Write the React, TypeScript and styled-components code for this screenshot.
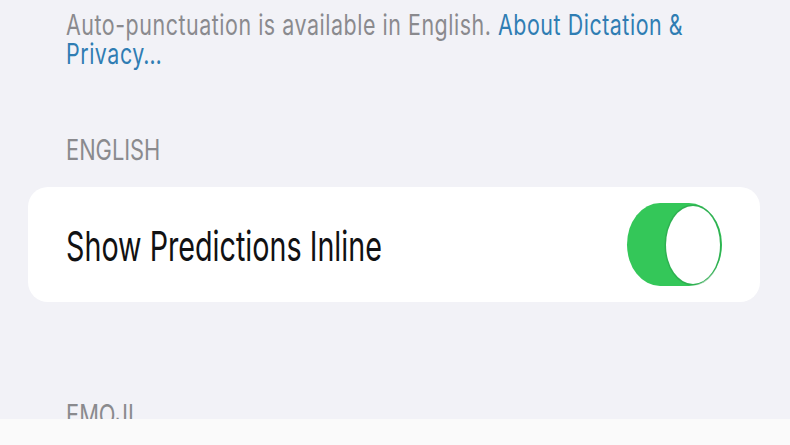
import React from "react";
import styled, { createGlobalStyle } from "styled-components";

const TS_BODY = 0.7; // horizontal squeeze of the body text
const TS_SMALL = 0.765; // horizontal squeeze of the footnote text
const TS_HEADER = 0.78; // horizontal squeeze of the section headers

const Global = createGlobalStyle`
  html, body {
    margin: 0;
    padding: 0;
    background: #f2f2f7;
    overflow: hidden;
  }
  body {
    font-family: Inter, "Noto Sans", Roboto, sans-serif;
    -webkit-font-smoothing: antialiased;
  }
`;

const Page = styled.div`
  width: 790px;
  height: 445px;
  background: #f2f2f7;
  overflow: hidden;
  position: relative;
`;

const Content = styled.div`
  display: flex;
  flex-direction: column;
  padding: 11px 30px 0 28px;
`;

const Footnote = styled.p`
  margin: 0 0 0 38px;
  width: ${660 / TS_SMALL}px;
  transform: scaleX(${TS_SMALL});
  transform-origin: left top;
  font-size: 28px;
  line-height: 29px;
  letter-spacing: 0.7px;
  color: #8a8a8e;
`;

const Link = styled.span`
  color: #2f7db3;
`;

const SectionHeader = styled.div<{ $top: number }>`
  margin: ${(p) => p.$top}px 0 0 38px;
  font-size: 28px;
  line-height: 29px;
  color: #8a8a8e;
  text-transform: uppercase;
  transform: scaleX(${TS_HEADER});
  transform-origin: left top;
`;

const Card = styled.div`
  margin-top: 22px;
  height: 115px;
  background: #ffffff;
  border-radius: 20px;
  display: flex;
  align-items: center;
  justify-content: space-between;
  padding: 0 38px;
`;

const RowLabel = styled.span`
  display: inline-block;
  font-size: 41px;
  line-height: 1;
  padding-top: 3px;
  color: #111113;
  transform: scaleX(${TS_BODY});
  transform-origin: left center;
  white-space: nowrap;
`;

const Track = styled.div<{ $on: boolean }>`
  width: 95px;
  height: 83px;
  box-sizing: border-box;
  border-radius: 33px / 41.5px;
  background: ${(p) => (p.$on ? "#34c759" : "#e9e9eb")};
  display: flex;
  align-items: center;
  justify-content: ${(p) => (p.$on ? "flex-end" : "flex-start")};
  padding: 0 2px;
  flex-shrink: 0;
`;

const Knob = styled.div`
  width: 54px;
  height: 78px;
  border-radius: 50%;
  background: #ffffff;
  box-shadow: 0 0 0 1.5px rgba(40, 150, 70, 0.45);
`;

const BottomBar = styled.div`
  position: absolute;
  left: 0;
  right: 0;
  bottom: 0;
  height: 26px;
  background: #fafafa;
`;

function Toggle({ on }: { on: boolean }) {
  return (
    <Track $on={on} role="switch" aria-checked={on}>
      <Knob />
    </Track>
  );
}

export default function App() {
  return (
    <Page>
      <Global />
      <Content>
        <Footnote>
          Auto-punctuation is available in English.{" "}
          <Link>About Dictation &amp; Privacy…</Link>
        </Footnote>
        <SectionHeader $top={67}>English</SectionHeader>
        <Card>
          <RowLabel>Show Predictions Inline</RowLabel>
          <Toggle on />
        </Card>
        <SectionHeader $top={99}>Emoji</SectionHeader>
      </Content>
      <BottomBar />
    </Page>
  );
}
